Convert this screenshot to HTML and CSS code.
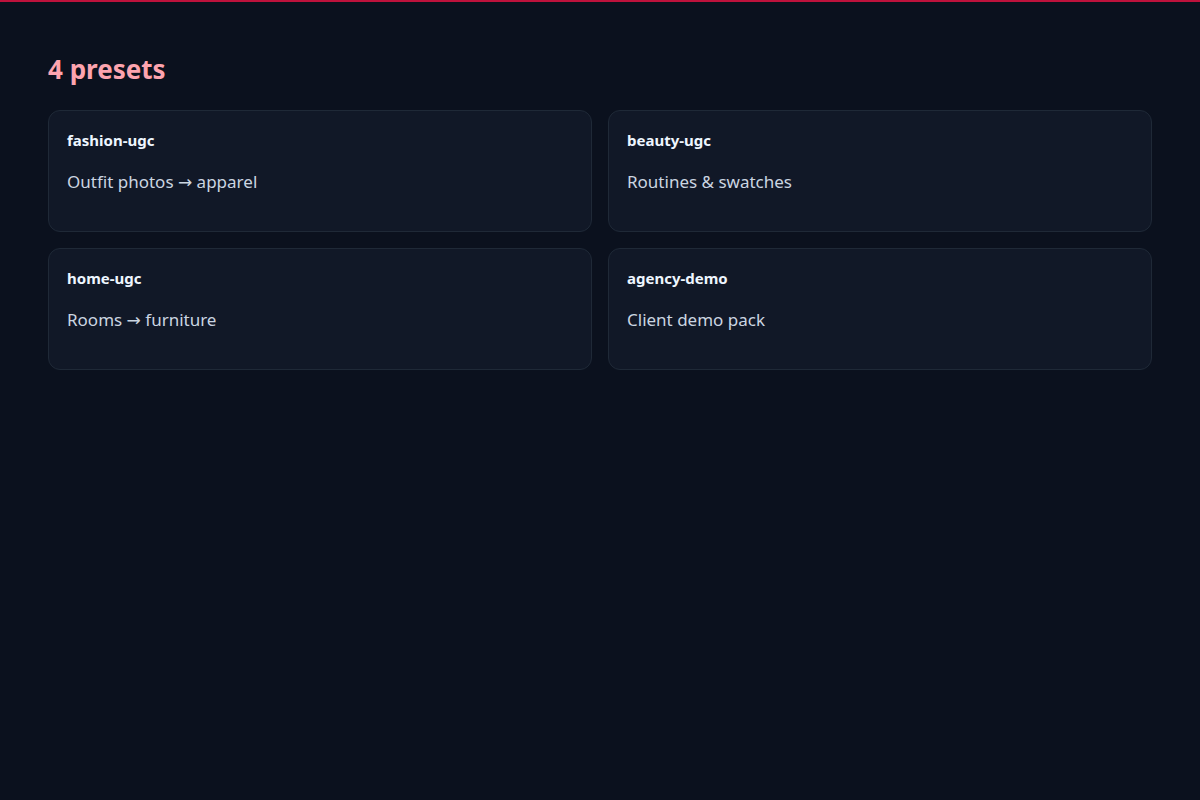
FILE: index.html
```html
<!DOCTYPE html>
<html lang="en">
<head>
<meta charset="utf-8">
<title>Presets</title>
<link rel="stylesheet" href="styles.css">
</head>
<body>
<main class="page">
  <h1 class="count">4 presets</h1>
  <section class="grid">
    <article class="card">
      <div class="card-name">fashion-ugc</div>
      <p class="card-desc">Outfit photos <span class="arrow">→</span> apparel</p>
    </article>
    <article class="card">
      <div class="card-name">beauty-ugc</div>
      <p class="card-desc">Routines &amp; swatches</p>
    </article>
    <article class="card">
      <div class="card-name">home-ugc</div>
      <p class="card-desc">Rooms <span class="arrow">→</span> furniture</p>
    </article>
    <article class="card">
      <div class="card-name">agency-demo</div>
      <p class="card-desc">Client demo pack</p>
    </article>
  </section>
</main>
</body>
</html>
```

FILE: styles.css
```css
html, body {
  margin: 0;
  padding: 0;
  background: #0b111e;
}

body {
  border-top: 2px solid #be123c;
  min-height: 798px;
  font-family: "Noto Sans", "Open Sans", sans-serif;
}

.page {
  padding: 51px 48px 48px;
}

.count {
  margin: 0 0 24px;
  font-size: 26px;
  font-weight: 700;
  line-height: 33px;
  color: #fda4af;
}

.grid {
  display: grid;
  grid-template-columns: 1fr 1fr;
  gap: 16px;
}

.card {
  background: #111827;
  border: 1px solid #1f2937;
  border-radius: 12px;
  padding: 19px 18px 30px;
  min-height: 71px;
}

.card-name {
  font-size: 15px;
  font-weight: 700;
  line-height: 20px;
  color: #eef6ff;
}

.card-desc {
  margin: 20px 0 0;
  font-size: 17px;
  line-height: 24px;
  color: #cbd5e1;
}

.arrow {
  font-family: "DejaVu Sans", sans-serif;
  font-size: 17px;
}
```
